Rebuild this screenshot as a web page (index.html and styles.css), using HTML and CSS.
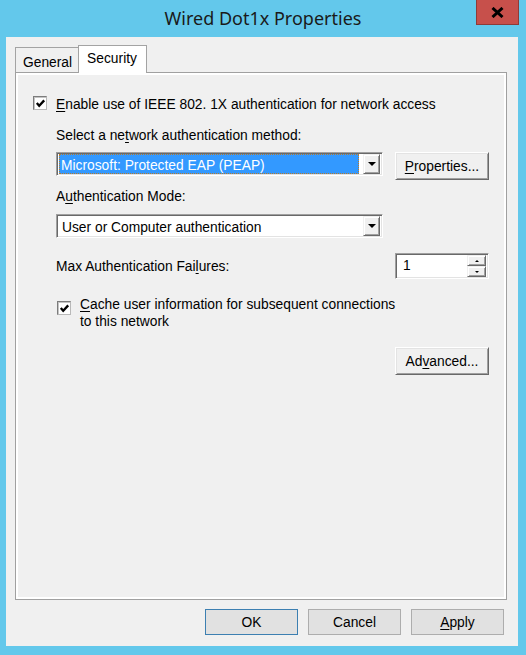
FILE: index.html
```html
<!DOCTYPE html>
<html lang="en">
  <head>
    <meta charset="UTF-8" />
    <meta name="viewport" content="width=device-width, initial-scale=1.0" />
    <title>Wired Dot1x Properties</title>
    <link rel="stylesheet" href="styles.css">
  </head>
  <body>
    <div class="window">
      <!-- Title bar -->
      <div class="titlebar">
        <span class="title">Wired Dot1x Properties</span>
        <button class="close-btn" aria-label="Close">
          <svg width="13" height="11" viewBox="0 0 13 11">
            <path d="M1.5 1 L11.5 10 M11.5 1 L1.5 10" stroke="#000" stroke-width="3" />
          </svg>
        </button>
      </div>

      <div class="client">
        <!-- Tabs -->
        <div class="tabs">
          <div class="tab">General</div>
          <div class="tab tab-active">Security</div>
        </div>

        <div class="tab-panel">
          <div class="check-row">
            <span class="checkbox">
              <svg width="11" height="11" viewBox="0 0 11 11">
                <path d="M1.8 5 L4.2 7.8 L9.2 2.4" fill="none" stroke="#000" stroke-width="2.3" />
              </svg>
            </span>
            <span class="check-text"><u>E</u>nable use of IEEE 802. 1X authentication for network access</span>
          </div>

          <div class="indent">
            <div class="field-label label-method">Select a ne<u>t</u>work authentication method:</div>
            <div class="select-row">
              <div class="combo">
                <span class="combo-text selected">Microsoft: Protected EAP (PEAP)</span>
                <span class="combo-arrow"><i class="tri-down"></i></span>
              </div>
              <button class="btn-3d">
                <span><u>P</u>roperties...</span>
              </button>
            </div>

            <div class="field-label label-mode">A<u>u</u>thentication Mode:</div>
            <div class="combo combo-mode">
              <span class="combo-text">User or Computer authentication</span>
              <span class="combo-arrow"><i class="tri-down"></i></span>
            </div>

            <div class="max-row">
              <span>Max Authentication Fai<u>l</u>ures:</span>
              <div class="spinbox">
                <span class="spin-value">1</span>
                <span class="spin-buttons">
                  <span class="spin-btn"><i class="tri-up small"></i></span>
                  <span class="spin-btn"><i class="tri-down small"></i></span>
                </span>
              </div>
            </div>

            <div class="cache-row">
              <span class="checkbox">
                <svg width="11" height="11" viewBox="0 0 11 11">
                  <path d="M1.8 5 L4.2 7.8 L9.2 2.4" fill="none" stroke="#000" stroke-width="2.3" />
                </svg>
              </span>
              <span class="cache-text"><u>C</u>ache user information for subsequent connections<br />to this network</span>
            </div>

            <div class="advanced-row">
              <button class="btn-3d">
                <span>Ad<u>v</u>anced...</span>
              </button>
            </div>
          </div>
        </div>

        <!-- Dialog buttons -->
        <div class="dialog-buttons">
          <button class="btn-flat btn-default">OK</button>
          <button class="btn-flat">Cancel</button>
          <button class="btn-flat"><u>A</u>pply</button>
        </div>
      </div>
    </div>
  </body>
</html>
```

FILE: styles.css
```css
body {
  margin: 0;
  background: #63c8eb;
  font-family: "Liberation Sans", Arial, sans-serif;
  font-size: 13.8px;
  color: #000;
}

button {
  font-family: inherit;
  font-size: inherit;
  color: inherit;
  padding: 0;
  margin: 0;
}

u {
  text-decoration-thickness: 1px;
  text-underline-offset: 2px;
}

.window {
  width: 526px;
  height: 655px;
  display: flex;
  flex-direction: column;
}

/* Title bar */
.titlebar {
  position: relative;
  height: 37px;
  display: flex;
  justify-content: center;
  align-items: center;
}

.title {
  font-family: "Noto Sans", sans-serif;
  font-size: 18px;
  color: #1a1a1a;
  margin-top: -1px;
}

.close-btn {
  position: absolute;
  top: 0;
  right: 7px;
  width: 43px;
  height: 25px;
  background: #c7504b;
  border: 1px solid #8e3b38;
  border-top: none;
  display: flex;
  align-items: center;
  justify-content: center;
}

/* Client area */
.client {
  flex: 1;
  margin: 0 8px 9px 6px;
  background: #f0f0f0;
  display: flex;
  flex-direction: column;
  padding: 8px 11px 11px 9px;
}

.tabs {
  display: flex;
  align-items: flex-end;
  height: 27px;
}

.tab {
  height: 25px;
  padding: 4px 6px 0 7px;
  border: 1px solid #a3a3a3;
  border-bottom: none;
  background: #f0f0f0;
  display: flex;
  align-items: center;
  box-sizing: border-box;
}

.tab-active {
  position: relative;
  z-index: 1;
  height: 28px;
  margin-left: -1px;
  margin-bottom: -1px;
  padding: 0 9px 2px 8px;
  background: #fff;
}

.tab-panel {
  flex: 1;
  border: 1px solid #a0a0a0;
  box-shadow: inset 0 0 0 2px #fff;
  padding: 23px 17px 0 17px;
}

/* Checkbox */
.checkbox {
  flex: none;
  width: 14px;
  height: 14px;
  box-sizing: border-box;
  border: 1px solid;
  border-color: #7c7c7c #b9b9b9 #b9b9b9 #7c7c7c;
  box-shadow: inset 1px 1px 0 #c4c4c4;
  background: #fff;
  display: flex;
  align-items: center;
  justify-content: center;
}

.check-row {
  display: flex;
  align-items: flex-start;
  gap: 9px;
}

.check-text {
  line-height: 16px;
  margin-top: 1px;
}

.indent {
  margin-left: 23px;
  display: flex;
  flex-direction: column;
}

.field-label {
  line-height: 16px;
}

.label-method {
  margin-top: 15px;
}

.label-mode {
  margin-top: 9px;
}

/* Combo boxes */
.select-row {
  display: flex;
  align-items: flex-start;
  gap: 12px;
  margin-top: 8px;
}

.combo {
  width: 327px;
  height: 24px;
  box-sizing: border-box;
  border: 1px solid;
  border-color: #a0a0a0 #fff #fff #a0a0a0;
  box-shadow: inset 1px 1px 0 #696969, inset -1px -1px 0 #e3e3e3;
  background: #fff;
  display: flex;
  align-items: center;
  padding: 1px 2px 1px 2px;
}

.combo-mode {
  margin-top: 9px;
}

.combo-text {
  flex: 1;
  height: 20px;
  padding: 3px 0 0 3px;
  box-sizing: border-box;
  line-height: 17px;
  white-space: nowrap;
  overflow: hidden;
}

.combo-text.selected {
  background: #3399ff;
  color: #fff;
  outline: 1px dotted #b87a2a;
  outline-offset: -1px;
  margin-right: 4px;
  padding-left: 2px;
}

.combo-arrow {
  flex: none;
  width: 17px;
  height: 20px;
  box-sizing: border-box;
  background: #f0f0f0;
  border: 1px solid;
  border-color: #f0f0f0 #696969 #696969 #f0f0f0;
  box-shadow: inset 1px 1px 0 #fff, inset -1px -1px 0 #a0a0a0;
  display: flex;
  align-items: center;
  justify-content: center;
}

.tri-down {
  width: 0;
  height: 0;
  border-left: 4px solid transparent;
  border-right: 4px solid transparent;
  border-top: 4px solid #000;
}

.tri-up {
  width: 0;
  height: 0;
  border-left: 4px solid transparent;
  border-right: 4px solid transparent;
  border-bottom: 4px solid #000;
}

.tri-down.small {
  border-left-width: 2px;
  border-right-width: 2px;
  border-top-width: 2px;
}

.tri-up.small {
  border-left-width: 2px;
  border-right-width: 2px;
  border-bottom-width: 2px;
}

/* Raised 3D buttons */
.btn-3d {
  width: 94px;
  height: 28px;
  box-sizing: border-box;
  background: #f0f0f0;
  border: 1px solid;
  border-color: #fff #696969 #696969 #fff;
  box-shadow: inset 1px 1px 0 #e3e3e3, inset -1px -1px 0 #a0a0a0;
  display: flex;
  align-items: center;
  justify-content: center;
}

/* Max failures */
.max-row {
  display: flex;
  align-items: center;
  justify-content: space-between;
  margin-top: 15px;
  width: 433px;
}

.spinbox {
  width: 94px;
  height: 26px;
  box-sizing: border-box;
  border: 1px solid;
  border-color: #a0a0a0 #fff #fff #a0a0a0;
  box-shadow: inset 1px 1px 0 #696969, inset -1px -1px 0 #e3e3e3;
  background: #fff;
  display: flex;
  padding: 1px 2px 1px 1px;
}

.spin-value {
  flex: 1;
  padding-left: 6px;
  line-height: 22px;
}

.spin-buttons {
  display: flex;
  flex-direction: column;
  width: 19px;
}

.spin-btn {
  flex: 1;
  box-sizing: border-box;
  background: #f0f0f0;
  border: 1px solid;
  border-color: #f0f0f0 #696969 #696969 #f0f0f0;
  box-shadow: inset 1px 1px 0 #fff, inset -1px -1px 0 #a0a0a0;
  display: flex;
  align-items: center;
  justify-content: center;
}

/* Cache checkbox */
.cache-row {
  display: flex;
  align-items: flex-start;
  gap: 9px;
  margin-top: 17px;
}

.cache-row .checkbox {
  margin-top: 5px;
  margin-left: 1px;
}

.cache-text {
  line-height: 17px;
}

.advanced-row {
  display: flex;
  justify-content: flex-end;
  margin-top: 17px;
}

/* Dialog buttons */
.dialog-buttons {
  display: flex;
  justify-content: flex-end;
  gap: 10px;
  margin-top: 9px;
  padding-right: 3px;
}

.btn-flat {
  width: 93px;
  height: 26px;
  background: #e1e1e1;
  border: 1px solid #adadad;
}

.btn-default {
  border-color: #3c7fb1;
}
```
